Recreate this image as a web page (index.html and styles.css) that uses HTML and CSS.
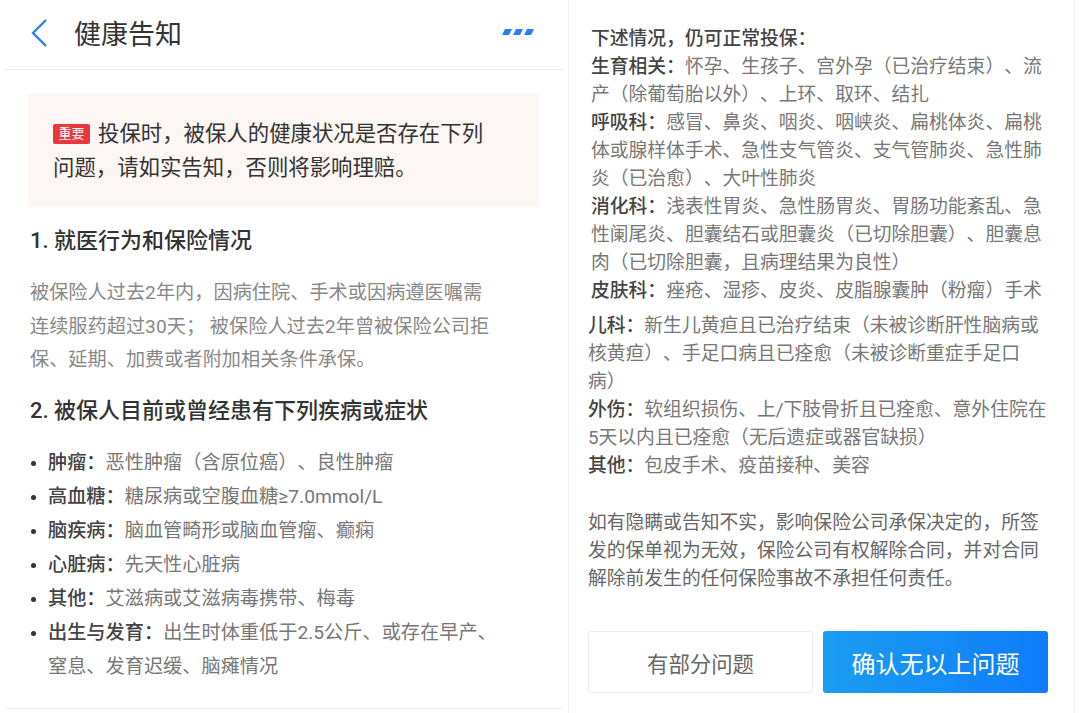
FILE: index.html
```html
<!DOCTYPE html>
<html>
  <head>
    <meta charset="UTF-8" />
    <link rel="stylesheet" href="styles.css">
  </head>
  <body>
    <div class="screens">
      <div class="screen screen-left">
        <div class="nav-bar">
          <svg class="back-icon" width="18" height="30" viewBox="0 0 18 30">
            <polyline points="16,2 3,15 16,28" fill="none" stroke="#2f80ed" stroke-width="2.4" />
          </svg>
          <span class="nav-title">健康告知</span>
          <svg class="more-icon" width="32" height="7" viewBox="0 0 32 7">
            <polygon points="3,0 10,0 7,6 0,6" fill="#2b7ef0" />
            <polygon points="14,0 21,0 18,6 11,6" fill="#2b7ef0" />
            <polygon points="25,0 32,0 29,6 22,6" fill="#2b7ef0" />
          </svg>
        </div>

        <div class="page-body">
          <div class="notice">
            <span class="badge">重要</span>投保时，被保人的健康状况是否存在下列<br>问题，请如实告知，否则将影响理赔。
          </div>

          <h3 class="section-title">1. 就医行为和保险情况</h3>
          <p class="section-text">
            被保险人过去2年内，因病住院、手术或因病遵医嘱需<br>连续服药超过30天； 被保险人过去2年曾被保险公司拒<br>保、延期、加费或者附加相关条件承保。
          </p>

          <h3 class="section-title">2. 被保人目前或曾经患有下列疾病或症状</h3>
          <ul class="disease-list">
            <li><span class="label">肿瘤：</span>恶性肿瘤（含原位癌）、良性肿瘤</li>
            <li><span class="label">高血糖：</span>糖尿病或空腹血糖≥7.0mmol/L</li>
            <li><span class="label">脑疾病：</span>脑血管畸形或脑血管瘤、癫痫</li>
            <li><span class="label">心脏病：</span>先天性心脏病</li>
            <li><span class="label">其他：</span>艾滋病或艾滋病毒携带、梅毒</li>
            <li><span class="label">出生与发育：</span>出生时体重低于2.5公斤、或存在早产、<br>窒息、发育迟缓、脑瘫情况</li>
          </ul>
        </div>
      </div>

      <div class="screen screen-right">
        <div class="info-block info-block-first">
          <div class="info-row info-head">下述情况，仍可正常投保：</div>
          <div class="info-row"><span class="label">生育相关：</span>怀孕、生孩子、宫外孕（已治疗结束）、流产（除葡萄胎以外）、上环、取环、结扎</div>
          <div class="info-row"><span class="label">呼吸科：</span>感冒、鼻炎、咽炎、咽峡炎、扁桃体炎、扁桃体或腺样体手术、急性支气管炎、支气管肺炎、急性肺炎（已治愈）、大叶性肺炎</div>
          <div class="info-row"><span class="label">消化科：</span>浅表性胃炎、急性肠胃炎、胃肠功能紊乱、急性阑尾炎、胆囊结石或胆囊炎（已切除胆囊）、胆囊息肉（已切除胆囊，且病理结果为良性）</div>
          <div class="info-row"><span class="label">皮肤科：</span>痤疮、湿疹、皮炎、皮脂腺囊肿（粉瘤）手术</div>
        </div>

        <div class="info-block info-block-second">
          <div class="info-row"><span class="label">儿科：</span>新生儿黄疸且已治疗结束（未被诊断肝性脑病或核黄疸）、手足口病且已痊愈（未被诊断重症手足口病）</div>
          <div class="info-row"><span class="label">外伤：</span>软组织损伤、上/下肢骨折且已痊愈、意外住院在5天以内且已痊愈（无后遗症或器官缺损）</div>
          <div class="info-row"><span class="label">其他：</span>包皮手术、疫苗接种、美容</div>
        </div>

        <p class="warning-text">如有隐瞒或告知不实，影响保险公司承保决定的，所签发的保单视为无效，保险公司有权解除合同，并对合同解除前发生的任何保险事故不承担任何责任。</p>

        <div class="actions">
          <button class="btn btn-partial">有部分问题</button>
          <button class="btn btn-confirm">确认无以上问题</button>
        </div>
      </div>
    </div>
  </body>
</html>
```

FILE: styles.css
```css
body {
  margin: 0;
  background: #fff;
  font-family: Roboto, "Noto Sans CJK SC", sans-serif;
  text-spacing-trim: space-all;
}
.screens {
  display: flex;
  height: 713px;
}
.screen-left {
  width: 569px;
  box-sizing: border-box;
  border-right: 1px solid #f3f3f3;
}
.nav-bar {
  display: flex;
  align-items: center;
  height: 70px;
  box-sizing: border-box;
  margin: 0 5px;
  padding: 0 25px 4px;
  border-bottom: 1px solid #ebebeb;
}
.nav-title {
  margin-left: 26px;
  font-size: 27px;
  color: #333;
}
.more-icon {
  margin-left: auto;
  margin-right: 4px;
}
.page-body {
  margin: 0 5px;
  padding: 24px 23px 24px;
  border-bottom: 1px solid #f0f0f0;
}
.notice {
  background: #fcf6f4;
  padding: 23px 25px 22px;
  font-size: 21.4px;
  line-height: 34px;
  color: #333;
}
.badge {
  display: inline-block;
  width: 37px;
  height: 20px;
  margin-right: 8px;
  border-radius: 2px;
  background: #e8383d;
  color: #fff;
  font-size: 13px;
  line-height: 20px;
  text-align: center;
  vertical-align: 3px;
}
.section-title {
  margin: 19px 0 0 2px;
  font-size: 22px;
  line-height: 30px;
  font-weight: 500;
  color: #333;
}
.section-text {
  margin: 20px 0 18px 2px;
  font-size: 19.2px;
  line-height: 33.5px;
  color: #888;
}
.disease-list {
  list-style: none;
  margin: 20px 0 0 2px;
  padding: 0 0 0 18px;
  font-size: 19.2px;
  line-height: 34px;
  color: #777;
}
.disease-list li::before {
  content: "";
  display: inline-block;
  width: 5px;
  height: 5px;
  margin-left: -17px;
  margin-right: 12px;
  border-radius: 50%;
  background: #333;
  vertical-align: middle;
}
.label,
.info-head {
  font-weight: 500;
  color: #444;
}
.screen-right {
  width: 506px;
  box-sizing: border-box;
  border-right: 1px solid #f3f3f3;
  padding: 25px 0 0 19px;
}
.info-block {
  max-width: 24.6em;
  font-size: 18.8px;
  line-height: 28px;
  color: #777;
}
.info-block-first {
  padding-left: 3px;
}
.info-block-second {
  margin-top: 7px;
}
.warning-text {
  max-width: 24.6em;
  margin: 29px 0 0;
  font-size: 18.8px;
  line-height: 28px;
  color: #666;
}
.actions {
  display: flex;
  gap: 10px;
  margin-top: 38px;
}
.btn {
  width: 225px;
  height: 62px;
  border-radius: 3px;
  font-family: inherit;
  cursor: pointer;
}
.btn-partial {
  background: #fff;
  border: 1px solid #ececec;
  color: #666;
  font-size: 21.4px;
}
.btn-confirm {
  border: none;
  background: linear-gradient(90deg, #1b9ef2, #0f7cf8);
  color: #fff;
  font-size: 24px;
}
```
